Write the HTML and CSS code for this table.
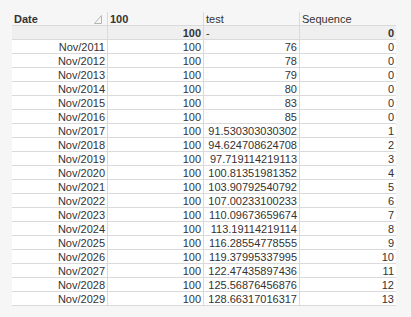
FILE: index.html
```html
<!DOCTYPE html>
<html>
<head>
<meta charset="utf-8">
<link rel="stylesheet" href="styles.css">
</head>
<body>
<div class="page">
  <div class="table">
    <div class="cell head bold sortable">Date<svg class="sort" width="8" height="9" viewBox="0 0 8 9"><path d="M0.5 8.5 L7.5 8.5 L7.5 0.5 Z" fill="none" stroke="#b4b4b4" stroke-width="1"/></svg></div>
    <div class="cell head bold">100</div>
    <div class="cell head">test</div>
    <div class="cell head last">Sequence</div>

    <div class="cell total"></div>
    <div class="cell total num bold">100</div>
    <div class="cell total">-</div>
    <div class="cell total num bold last">0</div>

    <div class="cell num">Nov/2011</div><div class="cell num">100</div><div class="cell num">76</div><div class="cell num last">0</div>
    <div class="cell num">Nov/2012</div><div class="cell num">100</div><div class="cell num">78</div><div class="cell num last">0</div>
    <div class="cell num">Nov/2013</div><div class="cell num">100</div><div class="cell num">79</div><div class="cell num last">0</div>
    <div class="cell num">Nov/2014</div><div class="cell num">100</div><div class="cell num">80</div><div class="cell num last">0</div>
    <div class="cell num">Nov/2015</div><div class="cell num">100</div><div class="cell num">83</div><div class="cell num last">0</div>
    <div class="cell num">Nov/2016</div><div class="cell num">100</div><div class="cell num">85</div><div class="cell num last">0</div>
    <div class="cell num">Nov/2017</div><div class="cell num">100</div><div class="cell num">91.530303030302</div><div class="cell num last">1</div>
    <div class="cell num">Nov/2018</div><div class="cell num">100</div><div class="cell num">94.624708624708</div><div class="cell num last">2</div>
    <div class="cell num">Nov/2019</div><div class="cell num">100</div><div class="cell num">97.719114219113</div><div class="cell num last">3</div>
    <div class="cell num">Nov/2020</div><div class="cell num">100</div><div class="cell num">100.81351981352</div><div class="cell num last">4</div>
    <div class="cell num">Nov/2021</div><div class="cell num">100</div><div class="cell num">103.90792540792</div><div class="cell num last">5</div>
    <div class="cell num">Nov/2022</div><div class="cell num">100</div><div class="cell num">107.00233100233</div><div class="cell num last">6</div>
    <div class="cell num">Nov/2023</div><div class="cell num">100</div><div class="cell num">110.09673659674</div><div class="cell num last">7</div>
    <div class="cell num">Nov/2024</div><div class="cell num">100</div><div class="cell num">113.19114219114</div><div class="cell num last">8</div>
    <div class="cell num">Nov/2025</div><div class="cell num">100</div><div class="cell num">116.28554778555</div><div class="cell num last">9</div>
    <div class="cell num">Nov/2026</div><div class="cell num">100</div><div class="cell num">119.37995337995</div><div class="cell num last">10</div>
    <div class="cell num">Nov/2027</div><div class="cell num">100</div><div class="cell num">122.47435897436</div><div class="cell num last">11</div>
    <div class="cell num">Nov/2028</div><div class="cell num">100</div><div class="cell num">125.56876456876</div><div class="cell num last">12</div>
    <div class="cell num">Nov/2029</div><div class="cell num">100</div><div class="cell num">128.66317016317</div><div class="cell num last">13</div>
  </div>
</div>
</body>
</html>
```

FILE: styles.css
```css
html, body {
  margin: 0;
  padding: 0;
  background: #f6f6f6;
}
.page {
  padding: 12px 0 0 12px;
  font-family: "Liberation Sans", Arial, sans-serif;
  font-size: 11px;
  color: #333333;
}
.table {
  display: grid;
  grid-template-columns: 96px 96px 96px 96px;
  width: 384px;
}
.cell {
  box-sizing: border-box;
  height: 14px;
  line-height: 12px;
  padding: 1px 2px 0 2px;
  border-right: 1px solid #dadada;
  border-bottom: 1px solid #dadada;
  background: #ffffff;
  white-space: nowrap;
  overflow: hidden;
}
.cell.last {
  border-right: none;
}
.cell.head {
  background: #f6f6f6;
  color: #333333;
}
.cell.total {
  background: #efefef;
}
.cell.num {
  text-align: right;
}
.bold {
  font-weight: bold;
}
.sortable {
  display: flex;
  justify-content: space-between;
  align-items: flex-start;
}
.sort {
  margin-top: 2px;
  margin-right: 3px;
}
```
